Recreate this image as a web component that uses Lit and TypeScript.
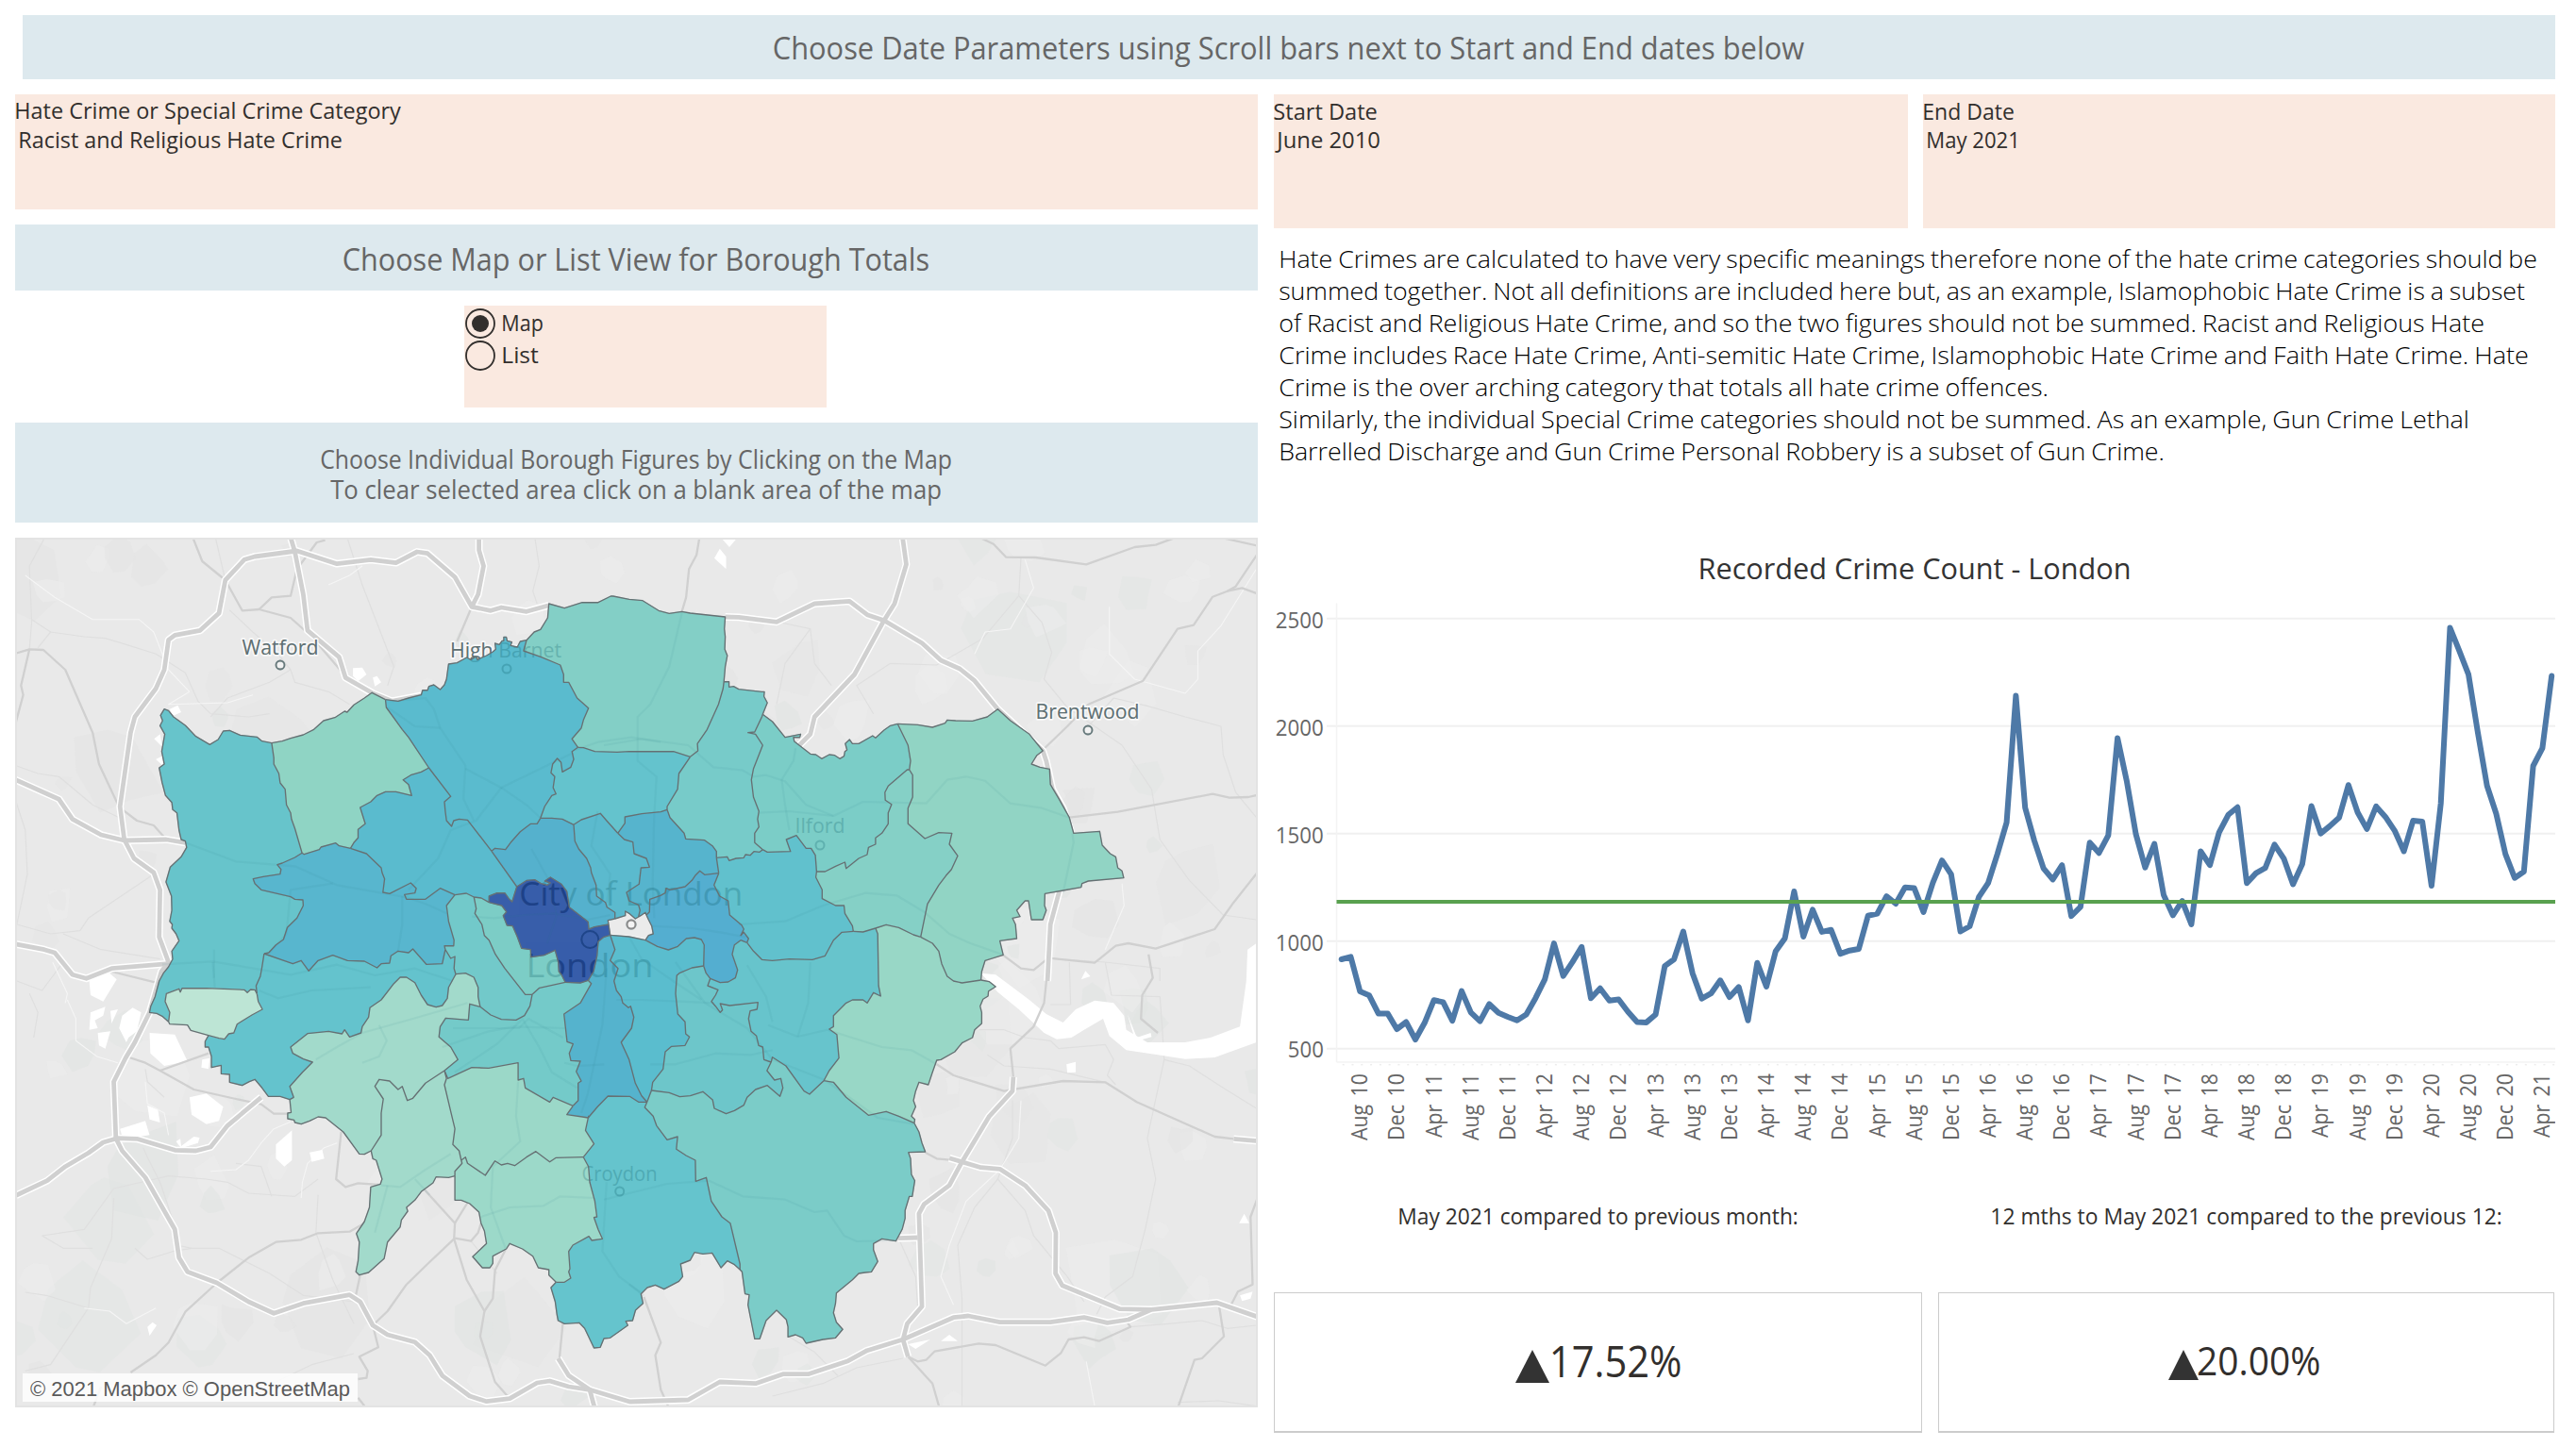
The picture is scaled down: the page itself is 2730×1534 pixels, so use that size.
import { LitElement, html, svg, css } from "lit";
import { customElement } from "lit/decorators.js";

type Pt = [number, number];

// Survey tiles: origin (px) and scale of each sheet the outlines were digitised on.
const TILES: Record<string, [number, number, number, number]> = {
  A: [0, 560, 2.24, 3],
  B: [640, 560, 2.24, 3],
  C: [0, 1020, 2.24, 3],
  D: [640, 1020, 2.24, 3],
  E: [480, 860, 3, 3],
};
const MAP_X = 16;
const MAP_Y = 570;

function trace(src: string): Pt[] {
  let t = TILES.A;
  const out: Pt[] = [];
  for (const tok of src.trim().split(/\s+/)) {
    if (TILES[tok]) {
      t = TILES[tok];
      continue;
    }
    const [x, y] = tok.split(",").map(Number);
    out.push([x / t[2] + t[0] - MAP_X, y / t[3] + t[1] - MAP_Y]);
  }
  return out;
}

const toPath = (pts: Pt[]) => "M" + pts.map((p) => p[0].toFixed(1) + " " + p[1].toFixed(1)).join("L");

const ARCS_SRC: Record<string, string> = {
  o1: "C 400,190 385,172 372,163 355,160 358,140 368,110 378,60 388,35 A 400,1395 410,1370 408,1345 425,1312 418,1290 408,1272 409,1260 403,1250 408,1215 407,1170 394,1125 404,1078 430,1045 443,1015 440,995 430,990 425,960 420,905 410,895 408,872 393,850 385,810 378,762 390,750 384,710 391,655 380,628 386,612 381,595 390,575 400,580 412,600 440,627 465,662 498,688 518,672 530,645 545,643 570,658 610,664 622,677 645,683",
  o2: "A 645,683 670,677 690,668 720,657 745,640 768,612 795,602 818,582 824,585 840,562 865,540 883,523 915,545",
  o3: "A 915,545 945,550 970,540 1000,530 1003,515 1015,515 1018,503 1030,498 1045,513 1055,498 1060,480 1065,432 1085,428 1108,411 1118,418 1130,408 1133,418 1155,405 1170,393 1177,385 1175,366 1185,370 1192,358 1196,358 1196,346 1202,346 1204,358 1215,362 1212,373 1228,378 1235,360 1250,356",
  o4: "A 1250,356 1268,330 1283,322 1300,285 1303,240 1340,254 1382,236 1420,236 1450,216 B 22,216 60,226 92,230 130,262 155,271 185,265 205,270 288,282 286,320 288,345 287,385 293,405 288,440 285,488",
  o5: "B 285,488 297,488 297,505 308,503 320,512 375,520 381,520 380,535 388,555 377,592",
  o6: "B 377,592 400,615 430,665 467,655 465,665 450,665 452,678 490,718 503,720 517,733 535,720 548,722 560,733 570,725 572,710 577,705 573,685 583,672 590,685 605,685 638,660 645,667 665,642 680,628 697,622",
  o7: "B 697,622 745,625 780,633 810,620 815,610 835,612 875,613 910,600 935,575 965,612 1010,655 1042,708 1028,722 1015,750 1035,760 1058,766 1060,815 1080,860 1105,920 1115,970 1177,964 1183,1008 1202,1035 1215,1045 1220,1080 1230,1090 1234,1112 1150,1122 1135,1130 1133,1142 1090,1152 1047,1162 1046,1200 1050,1215 1042,1245 1015,1245 1008,1185 1000,1185 980,1215 988,1235 970,1240 977,1260 980,1305 940,1312 948,1357 905,1375 897,1410 895,1437",
  o8: "B 895,1437 D 915,62 930,78 913,92 912,108 900,118 893,140 897,160 897,195 880,215 875,240 850,257 833,285 800,310 790,312 780,350 770,390 748,382 740,410 735,440 740,460 730,490 738,500 737,512",
  o9: "D 737,512 748,540 755,575 763,603 723,605 728,625 730,675 738,695 732,745 725,745 715,790 715,815 708,850 693,887 660,880 640,895 640,915 650,952 635,985 620,987 605,990 590,1010 552,1052 550,1085 545,1115 552,1145 567,1168 550,1195 520,1200 480,1212 472,1195 455,1185 437,1192 437,1160 433,1137 410,1107 385,1140 370,1198 358,1198 342,1090 345,1058 335,1055 328,985 323,978",
  o10: "D 323,978 310,962 293,950 278,972 257,925 235,928 215,923 205,948 182,960 187,1000 178,1015 143,1040 122,1027 103,1035 88,1055 93,1085 75,1107 68,1140 52,1142 57,1155 15,1195 0,1197 C 1425,1225 1410,1227 1388,1165 1375,1147 1340,1150 1325,1140 1322,1120 1318,1080 1308,1035 1320,1018",
  o11: "C 1320,1018 1303,995 1303,978 1278,972 1265,935 1240,912 1210,895 1202,912 1170,935 1170,958 1163,972 1145,972 1122,937 1155,895 1150,855 1142,830 1137,795 1115,768 1095,757 1080,757 1080,680",
  o12: "C 1080,680 1065,685 1035,683 1028,702 1000,730 985,757 965,780 968,792 953,820 950,842 920,890 912,943 875,987 853,995 845,985 850,950 853,890 846,863 865,825 877,780 880,715 903,706 907,690 893,630 885,625 881,600",
  o13: "C 881,600 865,611 853,610 815,540 773,495 755,492 735,505 715,515 700,510 698,502 683,498 683,480 691,478 688,437",
  o14: "C 688,437 665,427 637,427 622,400 605,373 592,380 575,392 545,382 545,357 525,355 525,328 502,335 502,300 495,270 487,270 487,252 495,233",
  o15: "C 495,233 453,217 445,200 403,197 400,190",
  h1: "C 400,190 403,160 392,125 395,100 425,85 428,95 432,83 490,83 580,88 587,97 595,87 605,88 610,100",
  h2: "C 610,100 613,125 623,150 598,168 563,197 555,225 543,228 533,245 520,242 495,233",
  h3: "C 610,100 608,75 618,45 622,15 A 627,1353",
  h4: "A 627,1353 638,1350 655,1325 673,1308 682,1270 705,1240 720,1200 719,1182 700,1180 690,1172 620,1150 605,1130 601,1115 625,1108 665,1100 667,1085 658,1070 670,1065 700,1047 717,1033",
  h5: "A 717,1033 712,1010 700,955 692,925 690,905 680,880 677,830 665,810 662,780 650,750 650,730 645,683",
  h6: "A 717,1033 722,1037 758,1022 762,1014 797,1001 805,1010 832,1018",
  h7: "A 832,1018 840,1000 850,985 850,958 867,940 855,888 880,870 895,850 915,838 940,838 977,850 970,815 957,800 975,785 1000,775 1018,762",
  h8: "A 1018,762 970,665 955,640 917,570 915,545",
  h9: "A 1018,762 1070,853 1055,870 1057,900 1060,930 1072,948 1077,930 1090,925 1110,928 1167,1027",
  h10: "A 1167,1027 1175,1018 1200,1022 1212,1000 1235,965 1260,940 1275,940 1283,922",
  h11: "A 1283,922 1293,885 1310,850 1320,845 1313,825 1317,790 1308,778 1312,750 1323,732 1332,745 1335,775 1355,760 1362,735 1358,710 1372,697",
  h12: "A 1372,697 1358,670 1380,635 1385,610 1397,572 1370,540 1350,490 1338,490 1338,465 1330,435 1285,410 1243,390 1250,356",
  h13: "A 1372,697 1385,698 1412,710 1465,712 B 60,710 165,710 205,727",
  h14: "B 205,727 223,708 222,685 245,640 272,560 283,510 285,488",
  h15: "B 205,727 178,780 175,830 150,885 150,895",
  h16: "B 150,895 135,902 90,908 50,918 50,938 33,970",
  h17: "B 33,970 A 1440,930 1425,907 1380,927 1362,943",
  h18: "A 1362,943 1335,925 1310,922 1283,922",
  h19: "A 1362,943 E 388,95 400,120 425,150 438,180 440,195 455,235 457,270 485,290 490,305 515,322 515,342",
  h20: "B 33,970 E 545,90 572,98 576,135 615,150 625,178 598,180 592,232 552,258 560,285 590,298 595,315 590,336",
  ci1: "E 495,360 493,347 515,342",
  ci2: "E 515,342 548,332 548,318 560,325 580,342 590,336",
  ci3: "E 590,336 597,332 612,322 615,330",
  ci4: "E 615,330 622,345 632,365 637,390 622,395 612,410",
  ci5: "E 612,410 560,399 500,394",
  ci6: "E 500,394 495,360",
  h21: "E 615,330 625,320 626,280 660,268 675,260 678,245 690,250 738,240 760,220 770,205 785,190 800,202 845,197",
  h22: "B 150,895 E 690,20 735,70 740,88 800,92 825,110 838,128 838,148",
  h23: "E 838,148 845,197",
  h24: "E 845,197 830,235 848,270 875,285 880,330 918,362 925,375 915,395 925,385 940,405 935,418",
  h25: "E 838,148 872,145 878,157 900,150 925,148 930,138 945,140 957,128 975,130 985,122",
  h26: "E 985,122 B 358,1000 358,970 368,950 365,925 368,900 355,855 350,800 355,765 377,690 360,655 342,650 358,648 375,600 377,592",
  h27: "E 985,122 B 388,1030 443,1028 433,990 457,977 480,1018 492,1018 502,1040 505,1092",
  h28: "B 505,1092 525,1092 550,1075 572,1062 575,1082 605,1050 625,1038 628,1015 645,1005 645,985 660,970 675,940 675,905 683,878 668,865 667,840 675,820 720,768 725,768",
  h29: "B 725,768 728,740 722,690 697,622",
  h30: "B 725,768 733,785 733,855 722,890 722,940 762,987 795,968 826,970 820,1005 840,1042 825,1085 812,1105 795,1135 768,1195 752,1300",
  h31: "B 505,1092 503,1110 518,1150 518,1178 550,1200 570,1200 572,1225 590,1265 592,1282",
  r1: "E 935,418 B 355,1345 375,1372 400,1375 440,1370 495,1372 525,1360 545,1310 565,1285 592,1282",
  r2: "B 592,1282 615,1284 645,1272",
  r3: "B 645,1272 670,1261 700,1270 735,1293 752,1300",
  r4: "B 752,1300 780,1320 795,1345 802,1385 815,1425 830,1440 850,1446 895,1437",
  r0: "E 935,418 915,410 895,425 888,455 905,505 898,530 875,543 850,545 818,532",
  r5: "E 818,532 805,515 797,492",
  r6: "E 797,492 799,425 790,408 768,402 742,405 715,430 685,441 650,430 612,410",
  h32: "E 818,532 810,555 843,568 835,585 822,605 835,620 850,640 857,632 850,612 880,618 970,608 967,630 945,635 940,660 948,700 965,715 972,745 985,750 D 380,310 397,318",
  h33: "D 397,318 400,302 432,330 475,410 488,420 522,377",
  h34: "D 522,377 535,345 558,305 553,230 535,213 545,205 545,170 575,130 590,120 615,120 625,130 640,97 657,108 652,75 650,-90 645,-108",
  h35: "D 522,377 545,382 575,430 628,487 670,475 700,490 737,512",
  h36: "D 397,318 387,345 405,375 420,370 425,400 418,427 388,392 360,405 340,430 332,455 310,472 290,482 262,465 258,438 235,412 205,425 180,428 155,415 113,408",
  h37: "E 797,492 760,498 720,515 712,522 708,580 715,645 738,670 740,708 752,718 738,745 695,748 675,765 668,820 635,862 D 113,408",
  h38: "E 500,394 515,440 500,475 525,500 512,540 520,570 535,590 540,610 558,625 565,620 575,655 568,690 535,735 560,790 580,865 600,905 617,925",
  h39: "D 113,408 E 617,925",
  h40: "E 617,925 D 97,462 117,490 125,520 150,565 175,555 172,595 195,615 217,630 218,697 243,685 255,760 280,810 300,830 323,960 323,978",
  h41: "E 617,925 590,925 562,907 493,906 460,940 430,975",
  h42: "E 430,975 412,972 362,965 382,937",
  h43: "E 382,937 398,920 398,865 408,858 392,828 405,795 375,793 370,770 382,740 363,733 353,645 405,610 440,548 430,538",
  h44: "E 430,538 447,510 458,460 462,415 480,400 500,394",
  h45: "E 430,538 405,546 357,544",
  h46: "E 357,544 345,520 337,510 335,480 325,442 290,458 248,464 247,440 218,436 205,400 190,365 172,363 160,332 170,320 155,300 115,290",
  h47: "E 115,290 115,270 140,260 165,260 178,278 188,288 203,240",
  h48: "A 1167,1027 E 203,240",
  h49: "E 203,240 235,220 260,218 280,230 300,235 310,228 292,222 310,210 345,232 362,255 370,305 430,352 432,375 450,368 495,360",
  h50: "E 357,544 275,562 252,583",
  h51: "E 252,583 230,583 165,500 135,455 115,410 100,395 92,360 70,325 74,310 67,273",
  h52: "E 67,273 90,276 115,290",
  h53: "E 67,273 A 1107,1161 1080,1166",
  h54: "A 832,1018 870,1035 905,1080 907,1095 913,1115 909,1158 925,1162 975,1128 988,1145 985,1160 960,1165 965,1180 1010,1180 1045,1145 1080,1166",
  h55: "A 1080,1166 1060,1200 1065,1250 1078,1310 1077,1328 1055,1328 1057,1340",
  h56: "A 627,1353 695,1385 715,1375 733,1408 755,1375 790,1358 825,1375 865,1377 895,1398 905,1385 925,1383 928,1360 945,1345 970,1350 980,1338 1012,1387 1050,1385 1057,1340",
  h57: "A 1057,1340 1070,1368 1080,1362 1078,1400 C 1082,38",
  h58: "C 1082,38 1105,35 1125,48 1135,80 1135,110 1140,142",
  h59: "C 1140,142 1165,168 1190,182 1225,184 1245,170 1258,140 E 252,583",
  h60: "C 1082,38 1065,80 1062,115 1050,138 1035,143 1015,135 1000,105 985,65 965,48 950,48 935,68 905,120 878,145 875,175 860,205 857,225 830,238 818,215 812,228 780,220 730,227 690,270 695,290 720,308 742,318 718,350 688,395 697,430 688,437",
  h61: "C 1140,142 1115,133 1112,184 1058,178 1045,205 1042,238 1070,270 1087,310 1055,345",
  h62: "C 1055,345 1010,385 980,433 967,440 955,395 945,405 925,378 900,373 890,395 910,435 905,480 905,550 881,600",
  h63: "C 1055,345 1060,370 1055,390 1070,475 1080,530 1075,580 1090,600 1095,630",
  h64: "C 1095,630 1097,640 1080,665 1080,680",
  h65: "C 1055,345 1063,370 1120,335 1160,337 1230,320 1230,375 1243,370 1247,400 1305,445 1313,430 E 382,937",
  h66: "C 1095,630 1105,620 1110,640 1152,678 1175,632 1190,645 1205,640 1222,647 1250,620 1272,602 1305,635 1320,622 1385,620",
  h67: "C 1385,620 1410,578 1390,535 1397,490 E 430,975",
  h68: "C 1385,620 1397,650 1400,700 1412,760 1417,810 1410,812 1420,850 1430,880 1405,885 1398,872 1360,900 1350,920 1353,975 1350,985 1355,1005 1340,1018 1320,1018",
};

const ARCS: Record<string, Pt[]> = Object.fromEntries(
  Object.entries(ARCS_SRC).map(([k, v]) => [k, trace(v)]),
);

// Joins border arcs into one closed ring, picking the nearest free end each time.
function ring(names: string): Pt[] {
  const rest = names.split(" ").map((n) => ARCS[n]);
  const out = [...rest.shift()!];
  const d = (a: Pt, b: Pt) => Math.hypot(a[0] - b[0], a[1] - b[1]);
  while (rest.length) {
    const end = out[out.length - 1];
    let best = 0;
    let dist = Infinity;
    let flip = false;
    rest.forEach((arc, i) => {
      const a = d(end, arc[0]);
      const b = d(end, arc[arc.length - 1]);
      if (Math.min(a, b) < dist) {
        dist = Math.min(a, b);
        best = i;
        flip = b < a;
      }
    });
    const [arc] = rest.splice(best, 1);
    out.push(...(flip ? [...arc].reverse() : arc));
  }
  return out;
}

const BOROUGHS: [string, string, string][] = [
  ["Hillingdon", "#67c4cb", "o1 h1 h3 h4 h5"],
  ["Harrow", "#8fd4c4", "o2 h5 h6 h7 h8"],
  ["Barnet", "#5abbce", "o3 h8 h9 h10 h11 h12"],
  ["Enfield", "#83cfc6", "o4 h12 h13 h14"],
  ["Waltham Forest", "#77cbc9", "o5 h14 h15 h22 h25 h26"],
  ["Redbridge", "#7bcdc7", "o6 h26 h27 h28 h29"],
  ["Havering", "#91d4c4", "o7 h29 h30 r4"],
  ["Bexley", "#98d7c6", "o8 r4 r3 h34 h35"],
  ["Bromley", "#7bccc8", "o9 h35 h33 h36 h39 h40"],
  ["Croydon", "#65c4cd", "o10 h40 h41 h67 h68"],
  ["Sutton", "#9cd9c9", "o11 h68 h66 h64"],
  ["Kingston", "#a2dacb", "o12 h64 h63 h62"],
  ["Richmond", "#a2dacb", "o13 h62 h61 h58 h60"],
  ["Hounslow", "#64c3cd", "o14 h60 h57 h56 h3 h2"],
  ["Heathrow", "#bde5d5", "o15 h1 h2"],
  ["Ealing", "#58b6ce", "h4 h6 h54 h55 h56"],
  ["Brent", "#5abbce", "h7 h9 h48 h47 h52 h53 h54"],
  ["Haringey", "#64c3cd", "h11 h13 h15 h16 h17 h18"],
  ["Camden", "#55b1cd", "h10 h18 h19 ci1 h49 h48"],
  ["Islington", "#5bbace", "h17 h20 ci2 h19"],
  ["Hackney", "#56b4cd", "h16 h22 h23 h21 ci3 h20"],
  ["Tower Hamlets", "#54aed0", "h21 h24 r0 r5 r6 ci4"],
  ["Newham", "#61c1cd", "h23 h25 h27 h31 r1 h24"],
  ["Barking", "#85d0c6", "h28 h30 r3 r2 h31"],
  ["Greenwich", "#67c4cc", "r0 r1 r2 h34 h33 h32"],
  ["Lewisham", "#6dc6ca", "r5 h32 h36 h37"],
  ["Southwark", "#5abdce", "r6 h37 h39 h38 ci5"],
  ["Lambeth", "#55b3cd", "h38 h41 h42 h43 h44"],
  ["Wandsworth", "#74cac9", "h43 h45 h50 h59 h61 h65"],
  ["Merton", "#9bd8c8", "h65 h42 h67 h66 h63"],
  ["Hammersmith", "#72c9ca", "h51 h53 h55 h57 h58 h59"],
  ["Kensington", "#7ccdc6", "h51 h52 h46 h50"],
  ["Westminster", "#385eaa", "h44 h45 h46 h47 h49 ci6"],
];

const MOTORWAYS = [
  "C 38,742 112,695 155,650 210,607 245,573 278,560 325,562 415,598 465,600 500,588 540,520 620,430",
  "A 1303,245 1250,265 1190,252 1165,262 1120,250 1080,155 1015,80 990,75 940,110 880,100 800,113 705,72 605,90 580,100 535,165 520,270 475,325 415,340 400,355 390,450 370,510 320,600 310,650 285,885 295,990 318,1050 365,1095 380,1150 378,1300 400,1380 C 383,30 355,160 320,255 298,305 270,380 275,560 290,600 345,685 415,850 425,940 445,985 515,1020 590,1080 650,1117 720,1085 830,1058 855,1080 885,1155 920,1185 985,1208 1020,1250 1050,1315 1115,1380 1155,1397 1210,1388 1275,1338 1305,1332 1350,1350 1400,1360 1495,1398 D 200,1392 275,1335 360,1340 425,1310 485,1310 580,1268 625,1235 710,1200 830,1130 865,1125 940,1145 1060,1145 1140,1130 1195,1147 1245,1137 1300,1105 1455,1083 1560,1132",
  "D 710,1200 720,1150 755,1095 748,800 760,770 820,710 850,635 915,490 970,410 972,365",
  "B 1053,1440 1060,1260 1110,1010 1108,960 1090,890 1065,830 1050,740 1042,708 935,575 880,485 845,447 800,420 755,365 665,293 625,275 583,232 500,240 410,298 320,283 288,282",
  "A 688,20 700,75 720,210 730,325 805,410 820,475 885,525 930,550 1010,530",
  "A 1137,20 1137,70 1148,120 1135,210 1120,250",
  "B 708,20 718,115 690,240 665,293 595,465 500,600 490,655 460,695",
  "A 20,790 140,862 172,925 240,975 295,993 395,990 440,1000",
  "A 20,1318 105,1340 130,1350 172,1420 205,1432 265,1400 400,1385",
  "D 820,623 895,653 940,658 1000,710 1055,790 1073,860 1072,990 1088,1028 1225,1103 1300,1105",
  "D 1495,562 1560,570",
  "D 710,1200 722,1255",
  "C 1325,1260 1350,1315 1400,1360 1412,1420",
  "D 698,878 745,876",
];

const MAIN_ROADS = [
  "A 455,20 480,105 535,165 575,262 615,258 690,285 740,345 820,470",
  "A 615,258 645,220 690,215 705,130 752,45 772,38",
  "A 20,405 70,385 103,387 155,450 220,650 235,750 283,887 325,930 365,945 395,990",
  "A 70,385 50,500 55,530 38,615",
  "A 1120,250 1085,360",
  "B 228,20 220,85 202,130 195,220 185,265",
  "B 885,25 925,50 955,92 1025,93 1145,115 1260,60 1310,53 1360,28",
  "B 1465,30 1560,58",
  "B 1560,65 1500,185 1480,200 1445,218 1400,308 1362,320 1280,485 1150,560 1100,630 1042,705",
  "B 1480,200 1515,190 1560,212",
  "B 1105,920 1220,902 1445,845 1485,857 1530,855 1560,846",
  "B 1560,1080 1495,1190 1450,1275 1310,1337 1245,1320 1215,1328 1165,1382 1055,1367 1020,1405 990,1400 945,1355",
  "B 1293,1355 D 1303,50 1278,105 1275,180 1315,225",
  "D 1055,0 1045,130 1020,205 965,275 972,365",
  "D 790,325 830,360 950,410 1090,378 1190,382 1265,445 1450,555 1500,563",
  "D 763,605 790,625 850,632",
  "C 300,300 345,320 380,345 460,405 560,435 620,452 650,482 690,482",
  "C 380,345 495,290",
  "C 265,30 370,65",
  "C 810,540 798,690 820,715 850,703 900,708",
  "C 310,1305 370,1250 400,1210 440,1112 515,1020 590,940 655,890 715,883 755,862 830,857 865,830",
  "C 985,690 1080,830 1078,880 1015,960 965,1025 920,1110 885,1155",
  "C 1078,880 1108,1010 1150,1110 1140,1190 1175,1335 1210,1388",
  "C 1200,915 1175,980 1170,1070 1150,1110",
  "C 1110,765 1080,830",
  "C 1080,878 1118,887 1135,860 1142,830",
  "C 1336,1150 1328,1260",
  "C 855,995 845,1058",
  "C 885,1155 898,1225 853,1255 873,1300 870,1322 850,1326",
  "C 220,1420 240,1350",
  "C 850,1385 870,1420",
  "D 95,1065 135,1210 122,1250 135,1360 155,1420",
  "D 722,1255 780,1340 797,1420",
  "D 722,1255 745,1270 765,1265 785,1238 890,1213 930,1218 1048,1283 1085,1243 1103,1200 1140,1193 1175,1205 1225,1175 1250,1160 1240,1140",
  "D 1560,720 1535,810 1540,1025 1505,1048 1485,1100",
  "D 1460,1090 1472,1190 1420,1260 1402,1265 1362,1420",
];

const LANES = [
  "A 105,33 70,120 75,300 70,385",
  "A 75,290 120,330 200,345 250,350 300,370 370,400 440,460 470,550 500,590 590,600 640,590",
  "A 120,330 90,380",
  "A 512,33 535,165",
  "A 825,33 860,180 935,440 920,500",
  "A 1270,33 1280,120 1265,200 1275,240",
  "A 545,260 600,330 660,400 690,450 700,490 780,520 830,560",
  "A 690,450 640,490 540,540 500,600",
  "A 38,755 90,780 140,790 220,880 283,920",
  "A 38,870 60,960 65,1100 40,1260 120,1290 190,1280 210,1240 365,1100",
  "A 150,1290 240,1340 380,1370",
  "B 288,285 420,300 490,320 500,430 540,500",
  "B 490,320 430,430 410,560",
  "B 990,95 985,215 1040,300 1063,395 1045,480 1100,570 1230,690 1300,830 1320,990 1390,1120 1470,1230 1549,1245",
  "B 985,215 900,350 790,435 680,430 600,500 640,590",
  "B 1150,630 1210,540 1290,565 1380,600 1465,630 1470,720 1500,840 1549,920",
  "B 1050,1367 1190,1380 1320,1400 1320,1440",
  "D 1105,0 1108,135 1060,135",
  "D 1190,0 1205,105 1320,110 1325,200 1330,310 1290,560 1310,690 1285,850 1255,1000 1190,1065 1170,1120",
  "D 890,215 950,215 1000,240 1060,250 1080,275 1190,262 1210,310 1195,360 1215,390",
  "D 910,295 950,330 1060,340 1190,382",
  "D 1330,310 1390,330 1470,400 1549,465",
  "D 935,690 1000,790 1020,870 1100,1000 1140,1080",
  "D 935,690 880,780 840,900 850,1070 850,1412",
  "D 970,440 970,560 935,690",
  "D 700,880 740,1000 745,1100",
  "D 400,1380 520,1340 600,1290 710,1260",
  "D 440,1192 500,1240 555,1315",
  "D 1250,1160 1340,1150 1420,1140 1480,1165 1549,1155",
  "D 1362,1400 1460,1395 1549,1412",
  "C 150,0 100,90 40,60",
  "C 70,100 90,160 80,240",
  "C 345,340 350,380 390,430",
  "C 340,590 350,620 380,700 410,820 420,900 455,910 520,910 640,990 720,1060 840,1080",
  "C 270,750 265,880 215,1035 210,1100 120,1280 60,1300",
  "C 100,870 200,850 270,720 400,680 490,690 540,700 590,735 700,745 755,690",
  "C 100,870 150,910 220,910",
  "C 210,1100 110,1060 60,1050",
  "C 320,910 350,945 410,920 455,910",
  "C 755,740 750,860 790,1010 840,1150",
  "C 600,1370 740,1280 840,1245",
  "C 1118,887 1180,990",
  "C 560,640 620,650 645,745",
];

const INNER_ROADS = [
  "A 440,1000 560,1060 700,1075 800,1135 970,1175 1020,1200 1060,1225",
  "A 385,1387 505,1378 690,1420 C 800,8 890,42 985,20 1075,60",
  "A 925,550 1010,540 1030,575 1045,635 1105,755 1100,860 1125,930",
  "A 920,570 985,630 1045,635",
  "A 1105,765 1190,825 1360,715",
  "A 1190,825 1130,930 1070,960 1040,1050 970,1150",
  "A 1190,825 1250,880 1283,922",
  "A 1365,705 1420,680 1500,665 1568,680",
  "B 0,690 90,670 200,690 B 260,760 330,770 355,790 385,785 430,805 480,880 545,915 615,870 765,875 815,800 860,790 905,803 965,875 1040,890 1105,920",
  "B 185,270 155,440 110,560 80,600 80,740 125,790 120,900",
  "B 455,700 450,740 422,800 430,880 440,960",
  "B 368,905 440,900 545,915",
  "B 320,1260 430,1250 520,1200 620,1160 695,1168 760,1220 820,1290 870,1320 945,1355",
  "B 1112,970 1115,1000 1090,1160",
  "C 1434,755 D 60,735 150,705 250,695 330,745 430,755 500,795 530,790 570,870 600,888 690,885",
  "C 905,710 950,715 1010,660 1070,610",
  "C 890,860 920,710",
  "C 985,690 1020,740",
  "C 1142,810 1210,780 1290,775 1330,745 1410,750",
  "C 1200,910 1165,780 1170,650 1235,570 1225,490 1230,380",
  "D 60,1025 95,1060",
  "C 1440,700 1430,920 1470,1000 1520,1050",
  "D 390,200 460,237 530,215 660,270 730,280 790,325",
  "D 400,190 385,110 340,10",
  "D 170,0 240,130 340,210 400,310 525,375 650,495 735,515",
  "D 110,325 170,325 265,290 350,295 400,280",
  "D 490,0 485,130 460,237",
  "C 505,0 510,80",
  "A 508,1340 508,1430",
  "C 615,90 660,115 740,90 880,80",
  "C 750,310 800,270 860,225 980,180 1110,130",
  "C 900,200 918,250 900,300 860,320",
  "C 1050,270 1160,220 1220,205 1340,210",
  "C 1080,350 1180,260 1240,180 1280,270 1310,350 1370,400",
  "C 1340,320 1370,330 1434,325",
  "C 1440,20 1430,200 1395,420 1380,480",
  "E 60,335 130,340 230,330 320,325 430,345 500,330",
  "E 250,120 300,210 330,330 300,420",
  "E 460,0 440,110 500,200 490,290",
  "E 640,0 635,230 640,340",
  "E 630,365 760,372 850,385 930,400",
  "E 560,400 600,470 700,540 790,600",
  "E 0,690 90,690 210,690 240,660 350,720",
  "E 520,600 600,600 720,605 830,610",
  "A 955,1170 955,1260 945,1345",
  "A 790,1130 690,1150 680,1290 640,1350",
];

const WATER = [
  "D 895,35 930,40 975,85 1010,120 1050,165 1090,192 1120,150 1165,122 1210,130 1235,170 1240,215 1290,255 1380,255 1440,240 1510,205 1525,60 1528,-40 1549,-60 1560,250 1450,303 1380,308 1300,292 1240,280 1200,235 1185,180 1140,215 1110,240 1075,245 1045,225 985,150 935,95",
  "C 355,225 415,230 445,315 390,330 357,290",
  "C 450,430 490,418 530,460 520,505 490,515 455,485",
  "C 655,580 693,535 693,630 675,650 655,625",
  "C 212,60 230,45 260,35 277,55 245,125 215,105",
  "C 290,170 315,145 335,160 325,220 305,240 300,255 283,210",
  "C 232,225 262,220 250,275 235,265",
  "C 215,160 250,142 245,170 225,185 232,210 212,215",
  "C 262,155 280,150 265,195",
  "C 480,310 498,305 495,340 478,335",
  "C 735,605 765,597 770,625 740,635",
  "C 350,455 375,470 380,510 355,500",
  "C 310,520 345,505 355,550 330,555 290,555 285,530",
  "C 418,570 428,562 430,585 460,555 474,558 470,575 430,592",
  "C 350,1160 362,1145 372,1155 355,1188",
  "D 1098,325 1120,317 1120,350 1100,352",
  "D 1143,28 1155,45 1133,55",
  "D 1508,830 1520,800 1532,830",
  "D 800,1205 820,1185 840,1205",
  "D 722,1215 775,1200 740,1230",
  "D 1243,165 1265,240 1298,225 1300,238 1268,250 1258,235",
  "D 1510,1060 1540,1048 1535,1070 1515,1078",
  "A 838,445 860,443 870,465 850,487 838,470",
  "A 885,475 895,470 905,490 890,503",
  "A 403,575 422,563 430,585 410,597",
  "A 366,670 380,655 385,695",
  "A 370,735 388,722 388,757",
  "B 280,33 315,33 298,60",
  "B 262,95 275,65 290,90 290,130",
];

const STREAMS = [
  "C 690,508 650,530 620,575 590,630 560,660 500,665",
  "C 160,120 180,180 180,250 230,300 280,320",
  "C 345,380 350,450 390,480 400,550",
  "C 800,575 770,590 730,640 718,700 715,750",
  "C 125,0 160,100 155,130",
  "C 200,1100 260,1110 300,1150 370,1100",
  "A 60,150 130,220 220,290 330,290 365,330 400,450 450,520",
  "A 450,520 400,560 540,555 600,530",
  "B 1000,100 1020,190 965,320 905,330 880,400",
  "B 1200,250 1200,400 1260,480 1380,525 1410,480 1410,390 1465,310 1549,130",
  "B 1230,1130 1235,1200 1190,1340",
  "D 990,440 985,560 940,660 860,760 820,900 800,1000 830,1090",
  "D 1145,1270 1165,1412",
  "A 780,180 830,150 860,120",
];

// Soft land-cover patches, laid out by a fixed pseudo-random sequence.
function patches() {
  let s = 7;
  const rnd = () => ((s = (s * 16807) % 2147483647) / 2147483647);
  const fills = ["#e2e5e3", "#e5e5e5", "#ededed", "#e4e4e4", "#eeeeee", "#e0e4e2"];
  return Array.from({ length: 210 }, (_, i) => {
    const cx = rnd() * 1317;
    const cy = rnd() * 922;
    const r = 8 + rnd() * (i < 80 ? 55 : 18);
    const pts: Pt[] = Array.from({ length: 7 }, (_, k) => {
      const a = (k / 7) * Math.PI * 2 + rnd() * 0.5;
      const q = r * (0.55 + rnd() * 0.5);
      return [cx + Math.cos(a) * q, cy + Math.sin(a) * q * 1.1] as Pt;
    });
    return svg`<path d=${toPath(pts) + "Z"} fill=${fills[Math.floor(rnd() * 6)]} opacity=".5"/>`;
  });
}

// name, centre x, baseline y, width, size, circle x, circle y, circle r
const PLACES: [string, number, number, number, number, number, number, number][] = [
  ["Watford", 297, 693.5, 81, 22, 297, 705, 4.5],
  ["High Barnet", 536, 696.5, 118, 22, 537, 709, 4.5],
  ["Brentwood", 1152.5, 762, 110, 22, 1153, 774, 4.5],
  ["Ilford", 869, 883, 53, 22, 869, 896, 4.5],
  ["Croydon", 656.5, 1251.5, 80, 22, 656.7, 1263, 4.5],
  ["City of London", 668.8, 960, 237, 34.5, 669, 980, 4.8],
  ["London", 625, 1036, 135, 34.5, 625.3, 996, 9],
];

const places = (cls: string) =>
  PLACES.map(
    ([n, x, y, w, size, cx, cy, r]) => svg`
      <g class=${cls}>
        <text x=${x - MAP_X - w / 2} y=${y - MAP_Y} font-size=${size} textLength=${w} lengthAdjust="spacingAndGlyphs">${n}</text>
        <circle cx=${cx - MAP_X} cy=${cy - MAP_Y} r=${r}/>
      </g>`,
  );

const lines = (list: string[], cls: string) => list.map((s) => svg`<path class=${cls} d=${toPath(trace(s))}/>`);

@customElement("borough-map")
class BoroughMap extends LitElement {
  static styles = css`
    :host { display: block; width: 1317px; height: 922px; }
    svg { display: block; background: #e9e9e9; }
    text { font-family: "Open Sans", "Noto Sans", sans-serif; }
    path { stroke-linejoin: round; }
    .lane { fill: none; stroke: #dfdfdf; stroke-width: 1.2; }
    .stream { fill: none; stroke: #f5f5f5; stroke-width: 1.1; }
    .main { fill: none; stroke: #d0d0d0; stroke-width: 2.3; }
    .case { fill: none; stroke: #fff; stroke-width: 7.8; }
    .core { fill: none; stroke: #d0d0d0; stroke-width: 4.8; }
    .inner { fill: none; stroke: #2c7f8c; stroke-opacity: 0.075; stroke-width: 2.2; }
    .water { fill: #fff; }
    .border { fill: none; stroke: #667073; stroke-width: 1.35; }
    .city { fill: #ebebeb; }
    .under text { fill: #7a7a7a; stroke: #f8f8f8; stroke-width: 3.5; paint-order: stroke; stroke-linejoin: round; }
    .under circle { fill: #f2f2f2; stroke: #858585; stroke-width: 1.8; }
    .over { opacity: 0.22; }
    .over text { fill: #00505c; }
    .over circle { fill: none; stroke: #00505c; stroke-width: 2; }
    .navy { fill: #142f7c; font-size: 34.5px; opacity: 0.55; }
    .navy-ring { fill: none; stroke: #142f7c; stroke-width: 2; opacity: 0.5; }
    .pin { fill: #f4f4f4; stroke: #8a8a8a; stroke-width: 2; }
    .credit { fill: #fff; fill-opacity: 0.82; }
    .credit-text { font: 22.5px "Liberation Sans", Arial, sans-serif; fill: #5a5a5a; }
    .frame { fill: none; stroke: #e3e3e3; stroke-width: 2; }
  `;

  render() {
    const westminster = toPath(ring("h44 h45 h46 h47 h49 ci6")) + "Z";
    return html`<svg width="1317" height="922" viewBox="0 0 1317 922">
      <clipPath id="west"><path d=${westminster}></path></clipPath>
      ${patches()} ${lines(LANES, "lane")} ${lines(STREAMS, "stream")}
      ${WATER.map((s) => svg`<path class="water" d=${toPath(trace(s)) + "Z"}/>`)}
      ${lines(MAIN_ROADS, "main")} ${lines(MOTORWAYS, "case")} ${lines(MOTORWAYS, "core")}
      ${places("under")}
      <path class="city" d=${toPath(ring("ci1 ci2 ci3 ci4 ci5 ci6")) + "Z"}></path>
      <path class="stream" d=${toPath(trace("E 497,391 560,395 614,406"))}></path>
      ${BOROUGHS.map(([, fill, arcs]) => svg`<path fill=${fill} stroke=${fill} stroke-width=".6" d=${toPath(ring(arcs)) + "Z"}/>`)}
      ${lines(INNER_ROADS, "inner")} ${places("over")}
      <g clip-path="url(#west)">
        ${PLACES.slice(5).map(([n, x, y, w]) => svg`<text class="navy" aria-hidden="true" x=${x - MAP_X - w / 2} y=${y - MAP_Y} textLength=${w} lengthAdjust="spacingAndGlyphs">${n}</text>`)}
        <circle class="navy-ring" cx="609.3" cy="426" r="9"></circle>
      </g>
      ${Object.values(ARCS).map((a) => svg`<path class="border" d=${toPath(a)}/>`)}
      <circle class="pin" cx="653" cy="410" r="4.5"></circle>
      <rect class="credit" x="8" y="886" width="355" height="30"></rect>
      <text class="credit-text" x="16" y="910" textLength="339" lengthAdjust="spacingAndGlyphs">© 2021 Mapbox © OpenStreetMap</text>
      <rect class="frame" x="1" y="1" width="1315" height="920"></rect>
    </svg>`;
  }
}

// Monthly line, June 2010 to May 2021, in plot units (204 = 2500, 1287 = 500).
const SERIES = [
  1062, 1056, 1143, 1153, 1199, 1199, 1238, 1220, 1264, 1222, 1165, 1170, 1217, 1142, 1196, 1218, 1175, 1197, 1207,
  1216, 1201, 1160, 1113, 1022, 1104, 1069, 1031, 1160, 1135, 1166, 1163, 1194, 1220, 1221, 1201, 1079, 1062, 992, 1097,
  1161, 1148, 1115, 1157, 1132, 1216, 1071, 1131, 1042, 1009, 891, 1005, 937, 993, 988, 1048, 1040, 1036, 952, 947, 903,
  922, 881, 883, 943, 870, 813, 848, 992, 979, 905, 870, 797, 717, 398, 680, 763, 833, 861, 825, 953, 930, 768, 794,
  750, 505, 612, 747, 831, 771, 900, 951, 915, 974, 790, 825, 742, 698, 679, 870, 845, 832, 773, 808, 873, 822, 676,
  745, 726, 705, 623, 692, 734, 677, 703, 738, 790, 713, 715, 877, 670, 227, 285, 345, 490, 625, 695, 797, 857, 841,
  575, 530, 348,
];
const CX = 1350;
const CY = 570;
const px = (i: number) => 1421.7 + i * 9.79 - CX;
const py = (v: number) => v / 2.376 + 570 - CY;

@customElement("crime-chart")
class CrimeChart extends LitElement {
  static styles = css`
    :host { display: block; width: 1358px; height: 660px; }
    svg { display: block; }
    text { font-family: "Open Sans", "Noto Sans", sans-serif; fill: #666; }
    .title { fill: #333; }
    .month { word-spacing: 3px; }
    .grid { stroke: #f0f0f0; stroke-width: 2; }
    .axis { stroke: #f3f3f3; stroke-width: 1.5; }
    .tick { stroke: #ececec; stroke-width: 1.5; }
    .avg { stroke: #59a14f; stroke-width: 4; }
    .line { fill: none; stroke: #4e79a7; stroke-width: 6; stroke-linejoin: round; stroke-linecap: round; }
  `;

  render() {
    const months = ["Aug", "Dec", "Apr"];
    const left = 66.5;
    const right = 1358;
    return html`<svg width="1358" height="660" viewBox="0 0 1358 660">
      <text class="title" x="449.5" y="44" font-size="31.5" textLength="459" lengthAdjust="spacingAndGlyphs">Recorded Crime Count - London</text>
      ${[2500, 2000, 1500, 1000, 500].map((v, k) => {
        const y = py(204 + k * 270.75);
        const w = v >= 1000 ? 51 : 38;
        return svg`<line class="grid" x1="56" x2=${right} y1=${y} y2=${y}/>
          <text x=${52.8 - w} y=${y + 9.8} font-size="23.8" textLength=${w} lengthAdjust="spacingAndGlyphs">${v}</text>`;
      })}
      <line class="axis" x1=${left} x2=${left} y1="69.5" y2="556"></line>
      <line class="axis" x1=${left} x2=${right} y1="556" y2="556"></line>
      ${SERIES.map((_, i) => svg`<line class="tick" x1=${px(i) + 1} x2=${px(i) + 3} y1="558.7" y2="558.7"/>`)}
      <path class="line" d=${toPath(SERIES.map((v, i) => [px(i), py(v)] as Pt))}></path>
      <line class="avg" x1=${left} x2=${right} y1="386" y2="386"></line>
      ${Array.from({ length: 33 }, (_, k) => {
        const m = months[k % 3];
        const year = 10 + Math.floor((k + 1) / 3);
        const w = m === "Apr" ? 68 : 71;
        return svg`<text class="month" transform=${`translate(${px(2 + k * 4) + 8} ${568 + w}) rotate(-90)`} font-size="22.8" textLength=${w} lengthAdjust="spacingAndGlyphs">${m} ${year}</text>`;
      })}
    </svg>`;
  }
}

// One line of text set to a fixed measure: copy, width, font size, line box height, baseline in that box.
// The text overhangs its box by the side bearing so the ink fills the measure.
const fit = (copy: string, w: number, size: number, h: number, base: number, cls = "") => {
  const bearing = size * 0.07;
  return html`<svg class="fit ${cls}" width=${w} height=${h}>
    <text x=${-bearing} y=${base} font-size=${size} textLength=${w + bearing * 1.5} lengthAdjust="spacingAndGlyphs">${copy}</text>
  </svg>`;
};

const NOTES: [string, number][] = [
  ["Hate Crimes are calculated to have very specific meanings therefore none of the hate crime categories should be", 1331],
  ["summed together. Not all definitions are included here but, as an example, Islamophobic Hate Crime is a subset", 1318],
  ["of Racist and Religious Hate Crime, and so the two figures should not be summed. Racist and Religious Hate", 1275],
  ["Crime includes Race Hate Crime, Anti-semitic Hate Crime, Islamophobic Hate Crime and Faith Hate Crime. Hate", 1322],
  ["Crime is the over arching category that totals all hate crime offences.", 813],
  ["Similarly, the individual Special Crime categories should not be summed. As an example, Gun Crime Lethal", 1259],
  ["Barrelled Discharge and Gun Crime Personal Robbery is a subset of Gun Crime.", 936],
];

@customElement("app-root")
class AppRoot extends LitElement {
  static styles = css`
    :host { display: block; }
    * { box-sizing: border-box; }
    .page { width: 2730px; height: 1534px; background: #fff; overflow: hidden; padding: 16px 22px 0 16px; }
    .fit { display: block; overflow: visible; font-family: "Open Sans", "Noto Sans", sans-serif; fill: #666; flex: none; }
    .dark { fill: #322f2d; }
    .body { fill: #000; font-weight: 300; word-spacing: -1px; }
    .banner { display: flex; flex-direction: column; align-items: center; justify-content: center; background: #dde9ee; }
    .top { height: 68px; margin-left: 8px; }
    .columns { display: grid; grid-template-columns: 1317px 1358px; column-gap: 17px; margin-top: 16px; }
    .left, .right { display: flex; flex-direction: column; }
    .left { gap: 16px; }
    .field { background: #fae9e0; display: flex; flex-direction: column; padding: 4px 0 0 1px; }
    .field .fit + .fit { margin-left: 4px; }
    .category { height: 122px; }
    .mid { height: 70px; }
    .low { height: 106px; }
    .views { width: 384px; height: 108px; margin-left: 476px; background: #fae9e0; padding: 2px 0 0 1px; }
    .option { display: flex; gap: 8px; height: 34px; align-items: center; }
    .dates { display: grid; grid-template-columns: 672px 670px; column-gap: 16px; height: 142px; }
    .notes { padding: 16px 0 0 7px; height: 328px; }
    .compare { display: grid; grid-template-columns: 687px 653px; column-gap: 17px; margin-top: 40px; }
    .caption { display: flex; justify-content: center; height: 100px; }
    .card { display: flex; align-items: flex-start; justify-content: center; gap: 3px; height: 149px; border: 1.5px solid #ccc; border-bottom-width: 2px; padding-top: 50px; }
    .card.second { gap: 1px; padding-right: 5px; }
    .up { fill: #333; display: block; flex: none; margin-top: 10px; }
  `;

  private radio(on: boolean) {
    return html`<svg width="32" height="32" viewBox="0 0 32 32">
      <circle cx="16" cy="16" r="15" fill="none" stroke="#322f2d" stroke-width="1.8"></circle>
      ${on ? svg`<circle cx="16" cy="16" r="9" fill="#322f2d"/>` : ""}
    </svg>`;
  }

  render() {
    return html`<div class="page">
      <div class="banner top">
        ${fit("Choose Date Parameters using Scroll bars next to Start and End dates below", 1090, 32.5, 40, 32.5)}
      </div>
      <div class="columns">
        <div class="left">
          <div class="field category">
            ${fit("Hate Crime or Special Crime Category", 407, 24, 30, 22, "dark")}
            ${fit("Racist and Religious Hate Crime", 341, 24, 30, 22.5, "dark")}
          </div>
          <div class="banner mid">
            ${fit("Choose Map or List View for Borough Totals", 619, 32.5, 40, 33.5)}
          </div>
          <div class="views">
            <div class="option">${this.radio(true)} ${fit("Map", 42, 24, 30, 22.5, "dark")}</div>
            <div class="option">${this.radio(false)} ${fit("List", 37, 24, 30, 22.5, "dark")}</div>
          </div>
          <div class="banner low">
            ${fit("Choose Individual Borough Figures by Clicking on the Map", 667, 26.5, 32, 27.5)}
            ${fit("To clear selected area click on a blank area of the map", 645, 26.5, 32, 27.5)}
          </div>
          <borough-map></borough-map>
        </div>
        <div class="right">
          <div class="dates">
            <div class="field">
              ${fit("Start Date", 108, 24, 30, 22.5, "dark")} ${fit("June 2010", 107, 24, 30, 22.5, "dark")}
            </div>
            <div class="field">
              ${fit("End Date", 95, 24, 30, 22.5, "dark")} ${fit("May 2021", 97, 24, 30, 22.5, "dark")}
            </div>
          </div>
          <div class="notes">${NOTES.map(([t, w]) => fit(t, w, 26.3, 34, 26, "body"))}</div>
          <crime-chart></crime-chart>
          <div class="compare">
            <div class="caption">${fit("May 2021 compared to previous month:", 422, 24, 34, 28, "dark")}</div>
            <div class="caption">${fit("12 mths to May 2021 compared to the previous 12:", 540, 24, 34, 28, "dark")}</div>
            <div class="card">
              <svg class="up" width="36" height="35" viewBox="0 0 36 35"><path d="M18 0L36 35H0Z"></path></svg>
              ${fit("17.52%", 136, 46, 50, 38.5, "dark")}
            </div>
            <div class="card second">
              <svg class="up" width="32" height="32" viewBox="0 0 32 32"><path d="M16 0L32 32H0Z"></path></svg>
              ${fit("20.00%", 127, 42, 50, 37, "dark")}
            </div>
          </div>
        </div>
      </div>
    </div>`;
  }
}
